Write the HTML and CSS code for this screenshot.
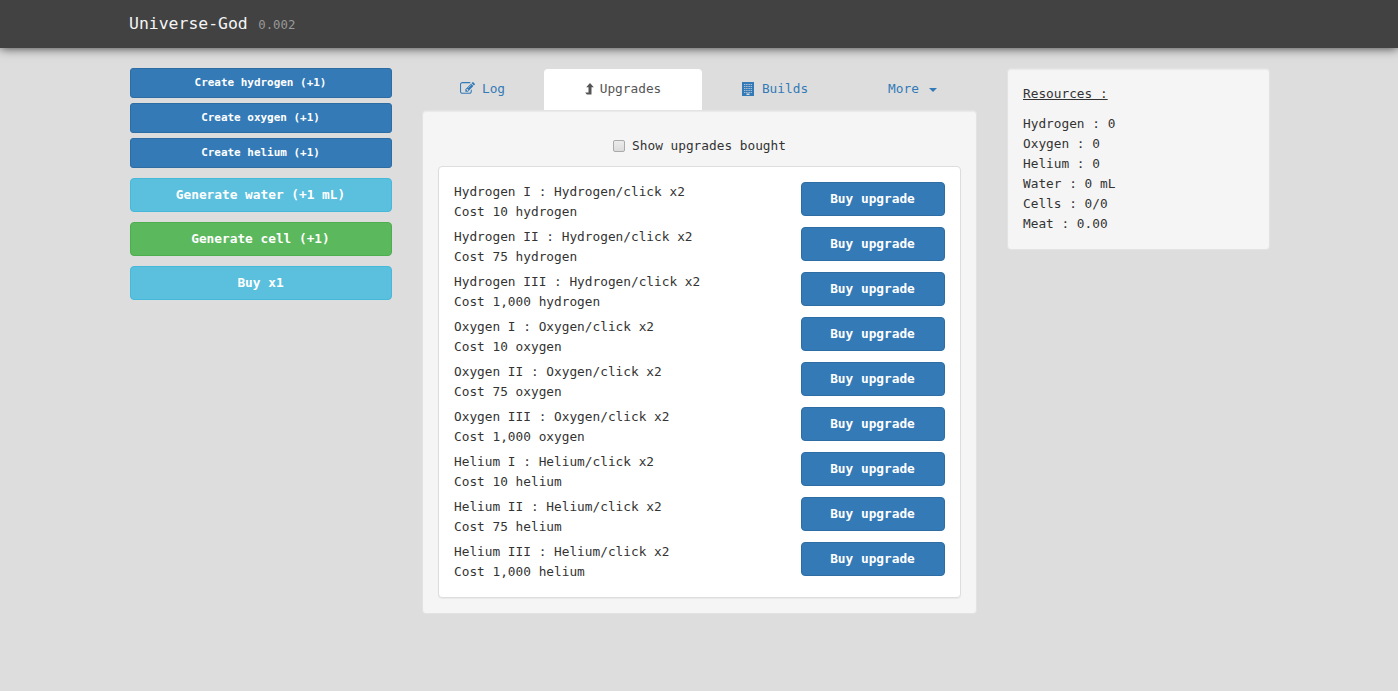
FILE: index.html
```html
<!DOCTYPE html>
<html lang="en">
<head>
<meta charset="utf-8">
<title>Universe-God</title>
<link rel="stylesheet" href="styles.css">
</head>
<body>
<header class="navbar"><span class="brand">Universe-God</span><small class="version">0.002</small></header>
<main class="columns">
  <section class="actions">
    <button class="btn primary small">Create hydrogen (+1)</button>
    <button class="btn primary small">Create oxygen (+1)</button>
    <button class="btn primary small">Create helium (+1)</button>
    <button class="btn info">Generate water (+1 mL)</button>
    <button class="btn success">Generate cell (+1)</button>
    <button class="btn info">Buy x1</button>
  </section>
  <section class="center">
    <nav class="tabs">
      <a class="tab"><svg class="icon-edit" viewBox="0 0 1792 1792"><path d="M888 1184l116-116-152-152-116 116v56h96v96h56zm440-720q-16-16-33 1l-350 350q-17 17-1 33t33-1l350-350q17-17 1-33zm80 594v190q0 119-84.500 203.500t-203.500 84.500h-832q-119 0-203.500-84.500t-84.500-203.500v-832q0-119 84.500-203.500t203.500-84.500h832q63 0 117 25 15 7 18 23 3 17-9 29l-49 49q-14 14-32 8-23-6-45-6h-832q-66 0-113 47t-47 113v832q0 66 47 113t113 47h832q66 0 113-47t47-113v-126q0-13 9-22l64-64q15-15 35-7t20 29zm-96-738l288 288-672 672h-288v-288zm444 132l-92 92-288-288 92-92q28-28 68-28t68 28l152 152q28 28 28 68t-28 68z"/></svg>Log</a>
      <a class="tab active"><svg class="icon-up" viewBox="0 0 9 12"><path d="M5 0L8.800 4.300H6.500V11.500H1.800L0.200 9.500H3.500V4.300H1.200Z"/></svg>Upgrades</a>
      <a class="tab"><svg class="icon-building" viewBox="0 0 12 14"><path d="M0 0H12V14H0Z"/><path class="windows" d="M2 2.500H10M2 4.500H10M2 6.500H10M2 8.500H10M2 10.500H10"/><path class="door" d="M4.500 11.500H7.500V13H4.500Z"/></svg>Builds</a>
      <a class="tab">More<span class="caret"></span></a>
    </nav>
    <div class="well upgrades">
      <label class="filter"><span class="checkbox"></span>Show upgrades bought</label>
      <div class="panel">
        <div class="row"><p>Hydrogen I : Hydrogen/click x2<br>Cost 10 hydrogen</p><button class="btn primary">Buy upgrade</button></div>
        <div class="row"><p>Hydrogen II : Hydrogen/click x2<br>Cost 75 hydrogen</p><button class="btn primary">Buy upgrade</button></div>
        <div class="row"><p>Hydrogen III : Hydrogen/click x2<br>Cost 1,000 hydrogen</p><button class="btn primary">Buy upgrade</button></div>
        <div class="row"><p>Oxygen I : Oxygen/click x2<br>Cost 10 oxygen</p><button class="btn primary">Buy upgrade</button></div>
        <div class="row"><p>Oxygen II : Oxygen/click x2<br>Cost 75 oxygen</p><button class="btn primary">Buy upgrade</button></div>
        <div class="row"><p>Oxygen III : Oxygen/click x2<br>Cost 1,000 oxygen</p><button class="btn primary">Buy upgrade</button></div>
        <div class="row"><p>Helium I : Helium/click x2<br>Cost 10 helium</p><button class="btn primary">Buy upgrade</button></div>
        <div class="row"><p>Helium II : Helium/click x2<br>Cost 75 helium</p><button class="btn primary">Buy upgrade</button></div>
        <div class="row"><p>Helium III : Helium/click x2<br>Cost 1,000 helium</p><button class="btn primary">Buy upgrade</button></div>
      </div>
    </div>
  </section>
  <aside class="well resources">
    <p class="heading">Resources :</p>
    <p>Hydrogen : 0<br>Oxygen : 0<br>Helium : 0<br>Water : 0 mL<br>Cells : 0/0<br>Meat : 0.00</p>
  </aside>
</main>
</body>
</html>
```
FILE: styles.css
```css
* { box-sizing: border-box; }
body {
  margin: 0;
  min-height: 691px;
  background: #ddd;
  color: #333;
  font: 12.79px/20px Consolas, "DejaVu Sans Mono", monospace;
}
p { margin: 0; }
.navbar {
  height: 48px;
  padding: 0 129px;
  background: #424242;
  box-shadow: 0 0 10px #333;
  display: flex;
  align-items: baseline;
  line-height: 47px;
  color: #f5f5f5;
}
.brand { font-size: 16.450px; }
.version { margin-left: 10.500px; font-size: 12.330px; color: #999; }
.columns {
  display: grid;
  grid-template-columns: 262px 555px 263px;
  column-gap: 30px;
  align-items: start;
  padding: 20px 0 0 130px;
}
.actions { display: flex; flex-direction: column; gap: 10px; }
.btn {
  height: 34px;
  padding: 0 1px 0 0;
  border: 1px solid;
  border-radius: 4px;
  color: #fff;
  font: bold 12.79px/20px Consolas, "DejaVu Sans Mono", monospace;
}
.small { height: 30px; border-radius: 3px; font-size: 10.960px; line-height: 18px; }
.small + .small { margin-top: -5px; }
.primary { background: #337ab7; border-color: #2e6da4; }
.info { background: #5bc0de; border-color: #46b8da; }
.success { background: #5cb85c; border-color: #4cae4c; }
.tabs {
  display: grid;
  grid-template-columns: 119px 158px 142px 129px;
  column-gap: 2px;
  padding: 1px 0 0 1px;
}
.tab {
  height: 41px;
  display: flex;
  align-items: center;
  justify-content: center;
  padding-bottom: 1px;
  color: #337ab7;
}
.active { background: #fff; color: #555; border-radius: 4px 4px 0 0; }
.tab svg { fill: currentColor; flex: none; }
.icon-edit { width: 15px; height: 15px; margin: 0 7px 1px 0; }
.icon-up { width: 9px; height: 12px; margin: 0 6px 1px 0; }
.icon-building { width: 12px; height: 14px; margin: 0 8px 1px 0; }
.windows { stroke: #c4d2df; stroke-width: .8; stroke-dasharray: 1.2 .5; }
.icon-building .door { fill: #ddd; }
.caret {
  margin: 2px 0 0 10px;
  border: 4px solid transparent;
  border-top-color: currentColor;
  border-bottom: 0;
}
.well {
  background: #f5f5f5;
  border: 1px solid #e3e3e3;
  border-radius: 4px;
  box-shadow: inset 0 1px 1px rgba(0, 0, 0, .05);
}
.upgrades { padding: 25px 15px 15px; }
.filter { display: flex; justify-content: center; align-items: center; height: 20px; margin-bottom: 10px; }
.checkbox {
  width: 12px;
  height: 12px;
  margin-right: 7px;
  border: 1px solid #aaa;
  border-radius: 2px;
  background: linear-gradient(#ececec, #dcdcdc);
}
.panel {
  height: 432px;
  padding: 15px;
  background: #fff;
  border: 1px solid #ddd;
  border-radius: 4px;
  box-shadow: 0 1px 1px rgba(0, 0, 0, .05);
}
.row { display: flex; justify-content: space-between; align-items: flex-start; height: 45px; }
.row .btn { width: 144px; }
.resources { height: 182px; padding: 15px; }
.heading { margin-bottom: 10px; text-decoration: underline; }
```
